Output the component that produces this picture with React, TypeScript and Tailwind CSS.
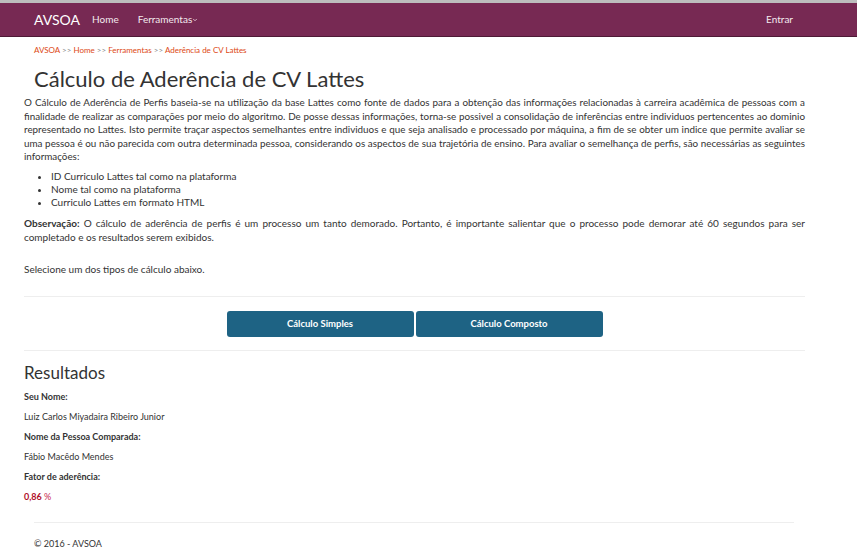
import { ChevronDown } from "lucide-react";

const crumbs = ["Home", "Ferramentas", "Aderência de CV Lattes"];

const requisitos = [
  "ID Curriculo Lattes tal como na plataforma",
  "Nome tal como na plataforma",
  "Curriculo Lattes em formato HTML",
];

export default function App() {
  return (
    <div className="min-h-[556px] bg-white text-[#333] font-['Lato','Noto_Sans',sans-serif]">
      {/* Navbar */}
      <div className="h-[3px] bg-[#bdbdbd]" />
      <nav className="flex h-[34px] items-center border-b border-[#4e1a36] bg-[#772953] pl-[34px] pr-[64px] text-white">
        <span className="w-[40px] text-[14px]">AVSOA</span>
        <a className="ml-[18px] text-[10px] text-[#f3e9ef]">Home</a>
        <a className="ml-[19px] flex items-center text-[10px] text-[#f3e9ef]">
          Ferramentas
          <ChevronDown className="h-[6px] w-[6px]" strokeWidth={3} />
        </a>
        <a className="ml-auto text-[10px] text-[#f3e9ef]">Entrar</a>
      </nav>

      <main className="mx-[24px] w-[781px]">
        {/* Breadcrumb */}
        <div className="mt-[7px] pl-[10px] text-[8px] text-[#dd4814]">
          AVSOA
          {crumbs.map((c) => (
            <span key={c}>
              <span className="text-[#888]"> &gt;&gt; </span>
              {c}
            </span>
          ))}
        </div>

        <h1 className="mt-[9px] pl-[10px] text-[22px] leading-[28px] text-[#333]">
          Cálculo de Aderência de CV Lattes
        </h1>

        <p className="mt-[3px] text-justify text-[9.85px] leading-[13.5px]">
          O Cálculo de Aderência de Perfis baseia-se na utilização da base Lattes como fonte de dados para a
          obtenção das informações relacionadas à carreira acadêmica de pessoas com a finalidade de realizar as
          comparações por meio do algoritmo. De posse dessas informações, torna-se possivel a consolidação de
          inferências entre individuos pertencentes ao dominio representado no Lattes. Isto permite traçar aspectos
          semelhantes entre individuos e que seja analisado e processado por máquina, a fim de se obter um indice que
          permite avaliar se uma pessoa é ou não parecida com outra determinada pessoa, considerando os aspectos de
          sua trajetória de ensino. Para avaliar o semelhança de perfis, são necessárias as seguintes informações:
        </p>

        <ul className="mt-[6px] list-disc pl-[27px] text-[10px] leading-[13.3px]">
          {requisitos.map((r) => (
            <li key={r}>{r}</li>
          ))}
        </ul>

        <p className="mt-[8px] text-justify text-[10px] leading-[13.5px]">
          <b>Observação:</b> O cálculo de aderência de perfis é um processo um tanto demorado. Portanto, é
          importante salientar que o processo pode demorar até 60 segundos para ser completado e os resultados
          serem exibidos.
        </p>

        <p className="mt-[19px] text-[10px] leading-[13.5px]">Selecione um dos tipos de cálculo abaixo.</p>

        <hr className="mt-[19px] border-[#eeeeee]" />

        <div className="flex justify-center gap-[2px] pt-[14px] pb-[13px]">
          <button className="h-[26px] w-[187px] rounded-[3px] bg-[#1e6384] text-[9.5px] font-bold text-white">
            Cálculo Simples
          </button>
          <button className="h-[26px] w-[187px] rounded-[3px] bg-[#1e6384] text-[9.5px] font-bold text-white">
            Cálculo Composto
          </button>
        </div>

        <hr className="border-[#eeeeee]" />

        {/* Resultados */}
        <h2 className="mt-[11px] text-[17px] leading-[22px]">Resultados</h2>
        <div className="mt-[3px] text-[9px] leading-[20px]">
          <div className="font-bold">Seu Nome:</div>
          <div>Luiz Carlos Miyadaira Ribeiro Junior</div>
          <div className="font-bold">Nome da Pessoa Comparada:</div>
          <div>Fábio Macêdo Mendes</div>
          <div className="font-bold">Fator de aderência:</div>
          <div className="text-[#c7254e]">
            <b className="text-[#b0102a]">0,86</b> %
          </div>
        </div>
      </main>

      <footer className="mx-[34px] mt-[15px] w-[760px] border-t border-[#eeeeee] pt-[14px] text-[9px] text-[#333]">
        © 2016 - AVSOA
      </footer>
    </div>
  );
}
